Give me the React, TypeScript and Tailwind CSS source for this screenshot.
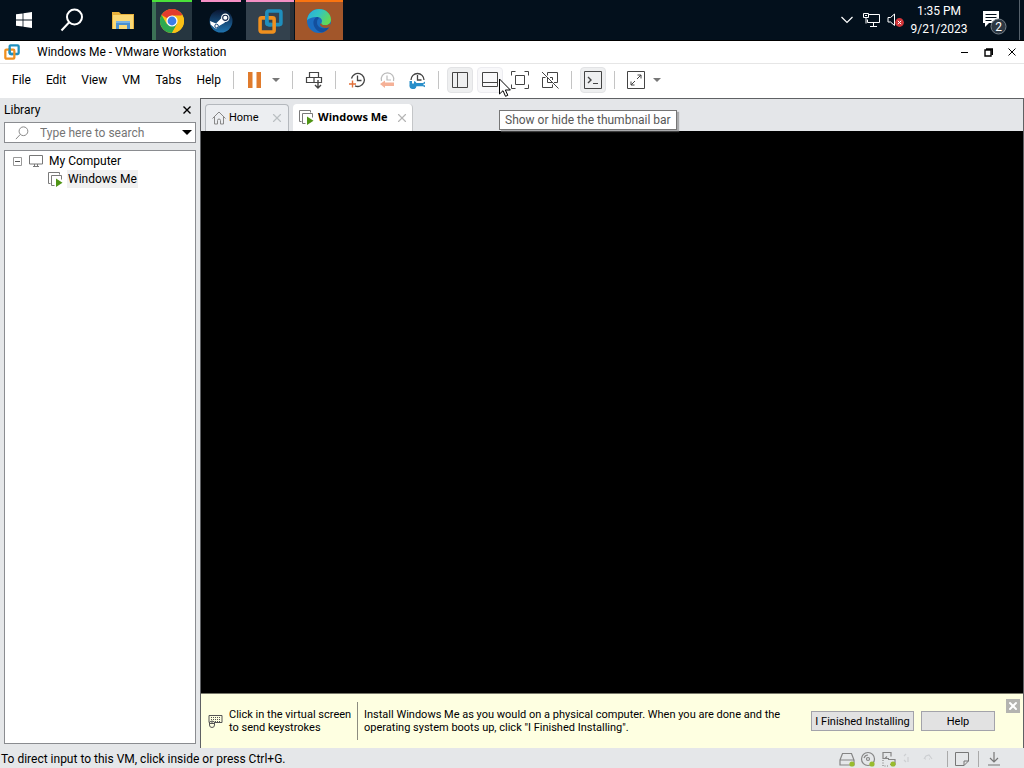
import React from "react";
import { X } from "lucide-react";

const menus = ["File", "Edit", "View", "VM", "Tabs", "Help"];

const VmwareLogo = ({ className }: { className: string }) => (
  <svg viewBox="0 0 24 24" className={className} fill="none" strokeWidth="3.4">
    <rect x="8.5" y="2" width="13.5" height="13" rx="1.5" stroke="#1f8fbd" />
    <rect x="2" y="8.5" width="13.5" height="13.5" rx="1.5" stroke="#f0901e" />
    <path d="M8.5 6v6.5q0 2.5 2.5 2.5h2" stroke="#1f8fbd" />
  </svg>
);

const StartIcon = () => (
  <svg viewBox="0 0 16 16" className="w-4 h-4" fill="#fff">
    <path d="M0 2.3 6.6 1.4V7.6H0zM7.4 1.3 16 0v7.6H7.4zM0 8.4h6.6v6.2L0 13.7zM7.4 8.4H16V16L7.4 14.8z" />
  </svg>
);

const SearchIcon = ({ className }: { className: string }) => (
  <svg viewBox="0 0 24 24" className={className} fill="none" stroke="currentColor">
    <circle cx="14.5" cy="9" r="7.5" />
    <path d="M9.2 14.3 1.5 22.5" />
  </svg>
);

const FolderIcon = () => (
  <svg viewBox="0 0 22 19" className="w-[22px] h-[19px]">
    <path d="M0 1h7l2 2h13v15H0z" fill="#e9b23c" />
    <path d="M1 4h20v14H1z" fill="#fbd976" />
    <path d="M4 10h14v8h-3v-4H7v4H4z" fill="#4a90d0" />
    <path d="M4 10h14v2H4z" fill="#78b3e4" />
  </svg>
);

const ChromeIcon = () => (
  <svg viewBox="0 0 24 24" className="w-6 h-6">
    <circle cx="12" cy="12" r="12" fill="#fbc116" />
    <path d="M12 12 1.6 6A12 12 0 0 1 22.4 6z" fill="#e33b2e" />
    <path d="M1.6 6A12 12 0 0 0 12 24l5.2-9-5.2-3-5.2 3z" fill="#2da94f" />
    <path d="M12 6.5h10.7A12 12 0 0 1 12 24l5-9z" fill="#fbc116" />
    <circle cx="12" cy="12" r="5.6" fill="#fff" />
    <circle cx="12" cy="12" r="4.4" fill="#3b7de8" />
  </svg>
);

const SteamIcon = () => (
  <svg viewBox="0 0 24 24" className="w-6 h-6">
    <defs>
      <linearGradient id="steam" x1="0" y1="0" x2="0" y2="1">
        <stop offset="0" stopColor="#0a1530" />
        <stop offset="1" stopColor="#1f74b0" />
      </linearGradient>
    </defs>
    <circle cx="12" cy="12" r="11.5" fill="url(#steam)" />
    <path d="m1 12 6 2.500 5.500-5.500 3.500 4.500-6 3.500a3 3 0 0 1-5.500 1L1.600 15.500z" fill="#fff" />
    <circle cx="16.3" cy="8.8" r="4.2" fill="#fff" />
    <circle cx="16.3" cy="8.8" r="2.600" fill="none" stroke="#14264a" strokeWidth="1.1" />
    <circle cx="7.6" cy="17" r="1.800" fill="none" stroke="#1b4a7c" strokeWidth="1" />
  </svg>
);

const EdgeIcon = () => (
  <svg viewBox="0 0 24 24" className="w-6 h-6">
    <defs>
      <linearGradient id="edgeTop" x1="0" y1="0" x2="1" y2="0.5">
        <stop offset="0" stopColor="#2aa9e0" />
        <stop offset="0.5" stopColor="#32c5c2" />
        <stop offset="1" stopColor="#63d957" />
      </linearGradient>
    </defs>
    <circle cx="12" cy="12" r="12" fill="#1b6cc0" />
    <path d="M0 11.5C.5 4.500 6 0 12 0c7 0 12 5 12 10.500 0 3.500-2.600 5.800-6 5.800-3 0-4.300-1.300-3.600-2.300 1.700-2.500-.2-6-4.400-6C5.500 8 1.500 9.500 0 11.500z" fill="url(#edgeTop)" />
    <path d="M10 8c-3 1.500-4 4.300-3.500 7 .8 5 5 8.500 9.500 8.300 2.700-1 5-2.800 6.200-5-6 2.500-12.500.5-12.200-5.300.1-2 1-3 2-3.700C11.500 8.500 11 8 10 8z" fill="#134f9e" />
    <path d="M14.400 14c-.7 1 .6 2.300 3.600 2.300 1.500 0 3-.5 4.300-1.500l1.700 1-1.600 2.500c-4 1.500-8.500.5-9.600-2.800z" fill="#a2562a" />
  </svg>
);

const apps = [
  { name: "Start", tile: "w-12", icon: <StartIcon /> },
  { name: "Search", tile: "w-12", icon: <SearchIcon className="w-6 h-6 text-white stroke-2" /> },
  { name: "File Explorer", tile: "w-[54px] mr-0.5", icon: <FolderIcon /> },
  { name: "Google Chrome", tile: "w-10 bg-[#263640] border-t-2 border-t-[#4ae23a] shadow-[inset_4px_0_0_#3c7156]", icon: <ChromeIcon /> },
  { name: "Steam", tile: "w-10 ml-[9px] border-t-2 border-t-[#f48fc4]", icon: <SteamIcon /> },
  { name: "VMware Workstation", tile: "w-12 ml-[5px] bg-[#33414d] border-t-2 border-t-[#f48fc4] shadow-[inset_-4px_0_0_#25303a]", icon: <VmwareLogo className="w-[25px] h-[25px]" /> },
  { name: "Microsoft Edge", tile: "w-12 ml-px bg-[#a2562a] border-t-2 border-t-[#fa7410]", icon: <EdgeIcon /> },
];

const Taskbar = () => (
  <header className="h-[41px] shrink-0 flex justify-between bg-[#03101c] text-white border-b border-black">
    <div className="flex">
      {apps.map((app) => (
        <button key={app.name} aria-label={app.name} className={`h-10 flex items-center justify-center ${app.tile}`}>
          {app.icon}
        </button>
      ))}
    </div>
    <div className="flex items-center">
      <button aria-label="Show hidden icons" className="w-6 flex justify-center">
        <svg viewBox="0 0 12 8" className="w-3 h-2" fill="none" stroke="#fff" strokeWidth="1.2">
          <path d="m.5 1 5.500 5.500L11.500 1" />
        </svg>
      </button>
      <button aria-label="Network" className="w-6 flex justify-center">
        <svg viewBox="0 0 17 14" className="w-[17px] h-[14px]" fill="none" stroke="#fff">
          <path d="M6 1.500h10.500v8H4.500v-3M7 13.500h7M10.500 9.500v4" />
          <path d="M.5.500h5v4h-5zM3 4.500v6M2 2.500h2" />
        </svg>
      </button>
      <button aria-label="Volume muted" className="w-6 flex justify-center">
        <svg viewBox="0 0 17 14" className="w-[17px] h-[14px]">
          <path d="M1 4.500h2.500L7.500 1v11.500l-4-3.500H1z" fill="none" stroke="#fff" />
          <circle cx="12.500" cy="9.500" r="4.400" fill="#d13438" />
          <path d="m10.800 7.800 3.400 3.400m0-3.400-3.400 3.400" stroke="#fff" />
        </svg>
      </button>
      <div className="w-16 text-center text-[12px] leading-[18px]">
        <p>1:35 PM</p>
        <p>9/21/2023</p>
      </div>
      <button aria-label="Notifications" className="w-[46px] pt-1 flex justify-center">
        <svg viewBox="0 0 25 26" className="w-[25px] h-[26px]">
          <path d="M1 2h16v12H7l-4 4v-4H1z" fill="#fff" />
          <path d="M3.500 5.500h11M3.500 8.500h11M3.500 11.500h6" stroke="#03101c" />
          <circle cx="16.500" cy="17.500" r="7.500" fill="#2c3742" stroke="#76818a" />
          <text x="16.500" y="21.500" fontSize="12" fill="#fff" textAnchor="middle">2</text>
        </svg>
      </button>
      <span className="w-px h-10 ml-0.5 mr-1 bg-[#56616b]" />
    </div>
  </header>
);

const TitleBar = () => (
  <div className="h-[23px] shrink-0 flex items-center bg-white border-b border-[#e6e6e6]">
    <VmwareLogo className="w-4 h-4 ml-1" />
    <h1 className="ml-[17px] flex-1 text-[12px]">Windows Me - VMware Workstation</h1>
    <button aria-label="Minimize" className="w-6 flex justify-center">
      <span className="w-[7px] h-px bg-black" />
    </button>
    <button aria-label="Restore" className="w-6 flex justify-center">
      <svg viewBox="0 0 9 9" className="w-[9px] h-[9px]" fill="none" stroke="#000">
        <path d="M2 1h6.500v6M1 2h6v6H1z" strokeWidth="1.400" />
      </svg>
    </button>
    <button aria-label="Close" className="w-6 flex justify-center">
      <svg viewBox="0 0 8 8" className="w-2 h-2" stroke="#000">
        <path d="m.5.500 7 7m0-7-7 7" />
      </svg>
    </button>
  </div>
);

const Separator = () => <span className="w-px h-[18px] mx-2 bg-[#c4c4c4]" />;

const Caret = ({ label }: { label: string }) => (
  <button aria-label={label} className="w-4 flex justify-center">
    <svg viewBox="0 0 8 4" className="w-2 h-1" fill="#777">
      <path d="M0 0h8L4 4z" />
    </svg>
  </button>
);

const ToolButton = ({ label, active, children }: any) => (
  <button
    aria-label={label}
    className={`w-[26px] h-[26px] flex items-center justify-center rounded-sm ${active ? "bg-[#eeeff0] border border-[#e2e3e5]" : ""}`}
  >
    <svg viewBox="0 0 18 18" className="w-[18px] h-[18px] shrink-0" fill="none" stroke="#444">
      {children}
    </svg>
  </button>
);

const Cursor = () => (
  <svg viewBox="0 0 12 19" className="absolute left-[22px] top-[11px] z-20 w-3 h-[19px]" fill="#fff" stroke="#000">
    <path d="M.5 1v15l3.500-3.300L6.500 18.300l2.300-1-2.400-5.300h5z" />
  </svg>
);

const Toolbar = () => (
  <div className="h-[34px] shrink-0 pb-0.5 flex items-center bg-white">
    <nav className="w-[225px] shrink-0 pl-3 pr-1 flex justify-between text-[12px]">
      {menus.map((menu) => (
        <button key={menu}>{menu}</button>
      ))}
    </nav>
    <Separator />
    <ToolButton label="Suspend this virtual machine">
      <path d="M2 1h4.500v16H2zM10.500 1H15v16h-4.500z" fill="#e07b2c" stroke="none" />
    </ToolButton>
    <Caret label="Power options" />
    <Separator />
    <ToolButton label="Send Ctrl+Alt+Del">
      <path d="M4.500 1.500h9v5h-9zM1.500 6.500h7.500v5H1.500zM9 6.500h7.500v5H9z" strokeWidth="1.200" />
      <path d="M13 9v8m-3-3 3 3 3-3" strokeWidth="1.400" />
    </ToolButton>
    <Separator />
    <div className="flex gap-1">
      <ToolButton label="Take a snapshot">
        <path d="M3.500 7.500a6.500 6.500 0 1 1 3.500 7.300M9.500 4.500v5h4" strokeWidth="1.300" />
        <path d="M4.500 9.500v7M1 13h7" stroke="#e2703a" strokeWidth="1.400" />
      </ToolButton>
      <ToolButton label="Revert to snapshot">
        <path d="M3.500 10a6.300 6.300 0 1 1 12 0M9 4.500v4.500h4" stroke="#bbb" strokeWidth="1.200" />
        <path d="M16 11.500v3.500H7V17l-5-4 5-3.500v2z" fill="#f5b197" stroke="none" />
      </ToolButton>
      <ToolButton label="Manage snapshots">
        <path d="M3 9a6.500 6.500 0 1 1 13 0M9.500 4v5h4" strokeWidth="1.300" />
        <path d="M1.500 10h2.500v2.500h2V10a3.500 3.500 0 0 1 2.500 2h6.500l2-1.500v2.200h-1.500v1.500h1.500v2l-2-1H8.500a3.500 3.500 0 0 1-7-1.200z" fill="#2a8fca" stroke="none" />
      </ToolButton>
    </div>
    <Separator />
    <div className="flex gap-1">
      <ToolButton label="Show or hide the library" active>
        <path d="M1.500 1.500h15v15h-15zM6.500 1.500v15" />
      </ToolButton>
      <div className="relative">
        <button aria-label="Show or hide the thumbnail bar" className="w-[26px] h-[26px] flex items-center justify-center rounded-sm bg-[#f8f8fa] border border-[#ececf0]">
          <svg viewBox="0 0 18 18" className="w-[18px] h-[18px] shrink-0" fill="none" stroke="#444">
            <path d="M1.500 1.500h15v14h-15zM1.500 11.500h15" />
          </svg>
        </button>
        <Cursor />
        <div role="tooltip" className="absolute left-[22px] top-[43px] z-10 h-5 px-[5px] flex items-center whitespace-nowrap bg-white border border-[#767676] text-[12px] text-[#575757] shadow-[2px_2px_1px_#77777788]">
          Show or hide the thumbnail bar
        </div>
      </div>
      <ToolButton label="Enter full screen">
        <path d="M.5 4.500v-4h4M13.500.500h4v4M17.500 13.500v4h-4M4.500 17.500h-4v-4" />
        <path d="M4.500 4.500h9v9h-9z" />
      </ToolButton>
      <ToolButton label="Enter Unity mode">
        <path d="M6.500 4.500v-3h10v10h-3.500M4.500 6.500h-3v10h10v-3M6.500 7v4.500H11M9 6.500h2.500V9" />
        <path d="m1 1 16.500 16.500" />
      </ToolButton>
    </div>
    <Separator />
    <ToolButton label="Show the console view" active>
      <path d="M.5.500h17v17H.5z" />
      <path d="m4 6 3 3-3 3" strokeWidth="1.400" />
      <path d="M9 12.500h5" />
    </ToolButton>
    <Separator />
    <ToolButton label="Stretch guest">
      <path d="M.5.500h17v17H.5z" />
      <path d="M10.500 4H14v3.500M14 4l-4 4M8 10l-4 4M4 10.500V14h3.500" />
    </ToolButton>
    <Caret label="Stretch options" />
  </div>
);

const VmIcon = () => (
  <svg viewBox="0 0 15 15" className="w-[15px] h-[15px] shrink-0" fill="none" stroke="#7a7a7a">
    <path d="M2.500 11.500h-2v-11h11v2" />
    <path d="M6.500 13.500h-3v-10h10v4" />
    <path d="M8 6.500v8.500l6.500-4.200z" fill="#4f9415" stroke="none" />
  </svg>
);

const Library = () => (
  <aside className="w-[200px] shrink-0 px-1 pb-1 flex flex-col">
    <div className="h-6 flex items-center justify-between">
      <h2 className="text-[12px]">Library</h2>
      <button aria-label="Close library" className="w-[18px] flex justify-center">
        <svg viewBox="0 0 8 8" className="w-2 h-2" stroke="#000" strokeWidth="1.400">
          <path d="m.5.500 7 7m0-7-7 7" />
        </svg>
      </button>
    </div>
    <div className="h-[21px] flex items-center bg-white border border-[#8a8c90]">
      <SearchIcon className="w-[14px] h-[14px] ml-2.5 text-[#888] stroke-[1.7px]" />
      <input
        aria-label="Search library"
        placeholder="Type here to search"
        className="min-w-0 flex-1 ml-[11px] text-[12px] placeholder:text-[#757575] outline-none"
      />
      <button aria-label="Search options" className="w-4 flex justify-center">
        <svg viewBox="0 0 10 5" className="w-2.5 h-[5px]">
          <path d="M0 0h10L5 5z" />
        </svg>
      </button>
    </div>
    <ul className="mt-[7px] flex-1 py-px bg-white border border-[#8a8c90] text-[12px] leading-[18px]">
      <li>
        <div className="flex items-center">
          <svg viewBox="0 0 9 9" className="w-[9px] h-[9px] ml-2" fill="none" stroke="#999">
            <path d="M.5.500h8v8h-8z" />
            <path d="M2 4.500h5" stroke="#555" />
          </svg>
          <svg viewBox="0 0 14 12" className="w-[14px] h-3 ml-[7px]" fill="none" stroke="#777">
            <path d="M.5.500h13v8.500H.5zM4 11.500h6M5.500 9v2.500M8.500 9v2.500" />
          </svg>
          <span className="ml-1.5">My Computer</span>
        </div>
        <ul>
          <li className="flex items-center pl-[43px]">
            <VmIcon />
            <span className="ml-1 px-px bg-[#f0f0f0]">Windows Me</span>
          </li>
        </ul>
      </li>
    </ul>
  </aside>
);

const Tabs = () => (
  <div className="h-8 shrink-0 pl-1 flex items-end gap-1 text-[11px] bg-[#e4e6e9]">
    <div className="w-[84px] h-[27px] pl-1.5 pr-1 flex items-center rounded-t-sm bg-[#eceef1] border border-b-0 border-[#b4b8bd]">
      <svg viewBox="0 0 14 14" className="w-[14px] h-[14px] shrink-0" fill="none" stroke="#888">
        <path d="M.5 7.500 7 1l6.500 6.500M2.500 6v7h3V9.500q0-1.500 1.500-1.500t1.500 1.500V13h3V6" />
      </svg>
      <button className="flex-1 pl-[3px] text-left">Home</button>
      <button aria-label="Close Home">
        <X size={14} strokeWidth={2} color="#bbbfc3" />
      </button>
    </div>
    <div className="w-[120px] h-[27px] pl-1.5 pr-[3px] flex items-center rounded-t-sm bg-white border-r border-[#c4c6c8]">
      <VmIcon />
      <button className="flex-1 pl-1 text-left font-bold font-['Open_Sans','Noto_Sans',sans-serif] whitespace-nowrap">Windows Me</button>
      <button aria-label="Close Windows Me">
        <X size={14} strokeWidth={2} color="#b5b5b5" />
      </button>
    </div>
  </div>
);

const MessageBar = () => (
  <div className="h-[55px] shrink-0 flex items-center bg-[#feffe1] border-t border-[#77776a] text-[11px] leading-[13px]">
    <svg viewBox="0 0 15 15" className="w-[15px] h-[15px] shrink-0 ml-[7px]" fill="none" stroke="#555">
      <path d="M5 8.500H1V1.500h13v7H7" />
      <path d="M3 3.500h10M3 5.500h10M3 7.500h10" strokeDasharray="1 1" />
      <path d="M1.500 8v3a2.500 2.500 0 0 0 5 0V8q-2.500-2-5 0zM1.500 9.500h5M4 7v2.500" fill="#feffe1" />
    </svg>
    <p className="w-[128px] shrink-0 ml-1.5 whitespace-nowrap">
      Click in the virtual screen
      <br />
      to send keystrokes
    </p>
    <span className="w-px h-[38px] shrink-0 bg-[#8c8c80]" />
    <p className="flex-1 min-w-0 ml-1.5 pr-2">
      Install Windows Me as you would on a physical computer. When you are done and the
      <br />
      operating system boots up, click "I Finished Installing".
    </p>
    <button className="w-[103px] h-5 shrink-0 whitespace-nowrap bg-[#e2e2e2] border border-[#a3a3aa]">I Finished Installing</button>
    <button className="w-[74px] h-5 shrink-0 ml-[7px] bg-[#e2e2e2] border border-[#a3a3aa]">Help</button>
    <button aria-label="Dismiss" className="w-[14px] h-[14px] shrink-0 self-start mt-[5px] ml-[11px] mr-[3px] flex items-center justify-center bg-[#b4b4b0]">
      <X size={12} strokeWidth={4} color="#fff" />
    </button>
  </div>
);

const StatusBar = () => (
  <footer className="h-5 shrink-0 pl-px pt-0.5 pr-6 flex items-center justify-between text-[12px]">
    <p>To direct input to this VM, click inside or press Ctrl+G.</p>
    <div className="flex items-center">
      <svg viewBox="0 0 98 16" className="w-[98px] h-4 mr-1" fill="none" stroke="#858585" strokeWidth="1.200">
        <path d="M1 9 3.500 2.500h9L15 9v5H1zM1 9h14" />
        <circle cx="29" cy="8" r="6.500" />
        <circle cx="29" cy="8" r="1.500" />
        <path d="M25 7q1-3 4-3" />
        <path d="M50 7.500h-6v-6h8v4M48 5.500l-2 2M49 8.500h7v5h-5" />
        <path d="M44 9v6h6" strokeDasharray="1 1.500" />
        <path d="M65 5l2-2m2 3v5m-4-2 2 2M85 8l2-3 3-1 3 4m-7 0h1m3 0h1" stroke="#cdcfd2" />
        <g fill="#98bb2e" stroke="none">
          <circle cx="13" cy="13" r="2.600" />
          <circle cx="33" cy="13" r="2.600" />
          <circle cx="54" cy="13" r="2.600" />
        </g>
      </svg>
      <span className="w-px h-4 ml-[6px] mr-[7px] bg-[#aaa]" />
      <svg viewBox="0 0 14 14" className="w-[14px] h-[14px]" fill="none" stroke="#777">
        <path d="M.5.500h13v8.500L9 13.500H.5zM9 13.500V9h4.500" />
      </svg>
      <span className="w-px h-4 mx-[9px] bg-[#aaa]" />
      <svg viewBox="0 0 12 14" className="w-3 h-[14px]" fill="none" stroke="#777" strokeWidth="1.200">
        <path d="M6 0v9.500M2 6l4 4 4-4M0 13h12" />
      </svg>
    </div>
  </footer>
);

const App = () => {
  return (
    <div className="h-screen flex flex-col overflow-hidden bg-[#e5e7e9] text-black font-[Roboto,'Open_Sans',sans-serif]">
      <Taskbar />
      <TitleBar />
      <Toolbar />
      <main className="flex-1 min-h-0 flex">
        <Library />
        <section className="flex-1 min-w-0 flex flex-col border-t border-l border-r border-[#5f6164]">
          <Tabs />
          <div className="flex-1 bg-black" />
          <MessageBar />
        </section>
      </main>
      <StatusBar />
    </div>
  );
};

export default App;
